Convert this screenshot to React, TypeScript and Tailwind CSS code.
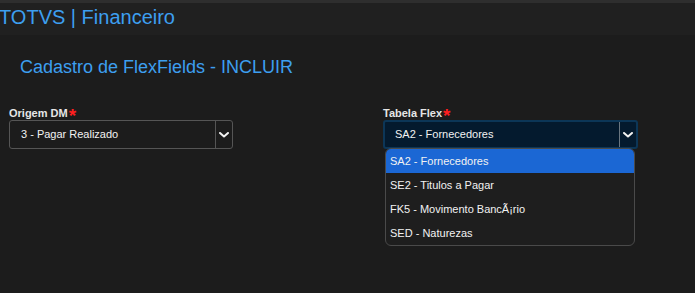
import React from "react";

const Chevron = () => (
  <svg width="10" height="6" viewBox="0 0 10 6" fill="none">
    <path d="M1 1 L5 4.5 L9 1" stroke="#f2f2f2" strokeWidth="2" strokeLinecap="round" strokeLinejoin="round" />
  </svg>
);

export default function App() {
  const items = ["SA2 - Fornecedores", "SE2 - Titulos a Pagar", "FK5 - Movimento BancÃ¡rio", "SED - Naturezas"];
  return (
    <div
      className="w-[695px] h-[293px] bg-[#1c1c1c] overflow-hidden"
      style={{ fontFamily: '"Liberation Sans", Arial, sans-serif' }}
    >
      <div className="h-[35px] border-t-[3px] border-[#2e2e2e] bg-[#202020] flex items-start pt-[4px]">
        <span className="text-[20px] leading-none text-[#3d9ff0] -ml-px">TOTVS | Financeiro</span>
      </div>
      <div className="pl-[20px] pt-[23px]">
        <h1 className="text-[18px] leading-none text-[#3d9ff0]">Cadastro de FlexFields - INCLUIR</h1>
      </div>
      <div className="flex pl-[9px] pt-[32px]">
        <div className="w-[374px] flex flex-col">
          <div className="h-[12px] flex items-start">
            <span className="text-[11px] leading-none font-bold text-[#e6e6e6]">Origem DM</span>
            <span className="text-[19px] leading-none font-bold text-[#ff1f1f] -mt-[2px] ml-px">*</span>
          </div>
          <div className="w-[224px] h-[29px] border border-[#555] rounded-[3px] flex items-stretch bg-[#1c1c1c]">
            <div className="flex-1 flex items-center pl-[11px] text-[11px] text-[#f2f2f2]">3 - Pagar Realizado</div>
            <div className="w-[17px] border-l border-[#555] flex items-center justify-center">
              <Chevron />
            </div>
          </div>
        </div>
        <div className="flex flex-col relative">
          <div className="h-[12px] flex items-start">
            <span className="text-[11px] leading-none font-bold text-[#e6e6e6]">Tabela Flex</span>
            <span className="text-[19px] leading-none font-bold text-[#ff1f1f] -mt-[2px] ml-px">*</span>
          </div>
          <div className="w-[255px] h-[29px] border-2 border-[#0c3657] rounded-[3px] flex items-stretch bg-[#041a2e]">
            <div className="flex-1 flex items-center pl-[10px] text-[11px] text-[#f2f2f2]">SA2 - Fornecedores</div>
            <div className="w-[17px] border-l border-[#6a7680] flex items-center justify-center">
              <Chevron />
            </div>
          </div>
          <div className="absolute left-[2px] top-[40px] w-[250px] border border-[#4a4a4a] rounded-[6px] bg-[#1e1e1e] overflow-hidden">
            {items.map((t, i) => (
              <div
                key={t}
                className={
                  "h-[24px] flex items-center pl-[4px] text-[11px] text-[#f2f2f2] " +
                  (i === 0 ? "bg-[#1b67d4]" : "")
                }
              >
                {t}
              </div>
            ))}
          </div>
        </div>
      </div>
    </div>
  );
}
